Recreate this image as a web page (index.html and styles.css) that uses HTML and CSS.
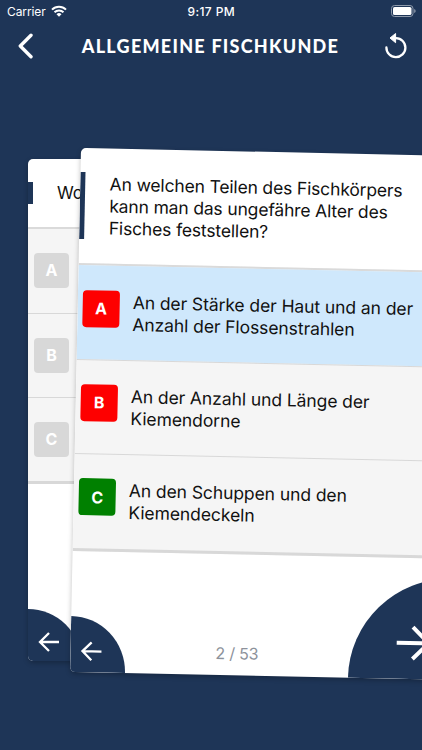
FILE: index.html
```html
<!DOCTYPE html>
<html lang="de">

<head>
  <meta charset="UTF-8">
  <meta name="viewport" content="width=device-width, initial-scale=1.0">
  <title>Allgemeine Fischkunde</title>
  <link rel="stylesheet" href="styles.css">
</head>

<body>
  <div class="status">
    <span class="carrier">Carrier</span>
    <svg class="wifi" width="16" height="12" viewBox="0 0 16 12" fill="none" stroke="#fff" stroke-width="2">
      <path d="M1 4.6a10 10 0 0 1 14 0M3.5 7.3a6.4 6.4 0 0 1 9 0" />
      <path d="M5.5 9.2a3.6 3.6 0 0 1 5 0L8 11.7z" fill="#fff" stroke="none" />
    </svg>
    <span class="time">9:17 PM</span>
    <svg class="battery" width="25" height="12" viewBox="0 0 25 12">
      <rect x=".5" y=".5" width="21.5" height="11" rx="3" fill="none" stroke="#8e9aab" />
      <rect x="2" y="2" width="18.5" height="8" rx="1.6" fill="#fff" />
      <path d="M23.2 4v4a2.1 2.1 0 0 0 0-4z" fill="#8e9aab" />
    </svg>
  </div>

  <header class="nav">
    <svg class="back" width="16" height="26" viewBox="0 0 16 26" fill="none" stroke="#fff" stroke-width="3.4" stroke-linecap="round" stroke-linejoin="round">
      <path d="M13 2.3L2.3 13L13 23.7" />
    </svg>
    <h1>ALLGEMEINE FISCHKUNDE</h1>
    <svg class="reload" width="22" height="26" viewBox="0 0 22 26">
      <path d="M1.4 14.5A9.5 9.5 0 1 0 11 5.1H8.5" fill="none" stroke="#fff" stroke-width="2.3" stroke-linecap="round" />
      <path d="M5 5L10.6 .5V9.7z" fill="#fff" stroke="#fff" stroke-linejoin="round" />
    </svg>
  </header>

  <main class="stack">
    <section class="card card--behind">
      <div class="question"><p>Wo</p></div>
      <ul class="answers">
        <li><span class="letter">A</span></li>
        <li><span class="letter">B</span></li>
        <li><span class="letter">C</span></li>
      </ul>
      <div class="prev">
        <svg class="arrow" width="22" height="20" viewBox="0 0 22 20"><path d="M11 1L2 10L11 19M2 10H21" /></svg>
      </div>
    </section>

    <section class="card card--front">
      <div class="question">
        <p>An welchen Teilen des Fischkörpers<br>kann man das ungefähre Alter des<br>Fisches feststellen?</p>
      </div>
      <ul class="answers">
        <li class="selected">
          <span class="letter wrong">A</span>
          <p>An der Stärke der Haut und an der<br>Anzahl der Flossenstrahlen</p>
        </li>
        <li>
          <span class="letter wrong">B</span>
          <p>An der Anzahl und Länge der<br>Kiemendorne</p>
        </li>
        <li>
          <span class="letter right">C</span>
          <p>An den Schuppen und den<br>Kiemendeckeln</p>
        </li>
      </ul>
      <div class="prev">
        <svg class="arrow" width="22" height="20" viewBox="0 0 22 20"><path d="M11 1L2 10L11 19M2 10H21" /></svg>
      </div>
      <span class="count">2 / 53</span>
      <div class="next">
        <svg class="arrow arrow--big" width="36" height="36" viewBox="0 0 36 36"><path d="M17 2L33 18L17 34M33 18H1" /></svg>
      </div>
    </section>
  </main>
</body>

</html>
```
FILE: styles.css
```css
* {
  box-sizing: border-box;
}
body {
  margin: 0;
  width: 422px;
  height: 750px;
  overflow: hidden;
  background: #1e3557;
  color: #111;
  font-family: Inter, "Liberation Sans", sans-serif;
}
h1, p, ul {
  margin: 0;
  padding: 0;
}
ul {
  list-style: none;
}
svg {
  display: block;
}

/* status bar */
.status {
  display: grid;
  grid-template-columns: auto 1fr auto 1fr;
  align-items: center;
  height: 22px;
  padding: 0 6px 0 7px;
  color: #fff;
  font-size: 12px;
}
.carrier {
  letter-spacing: -0.1px;
}
.wifi {
  margin-left: 5px;
}
.time {
  font-weight: 500;
  letter-spacing: 0.4px;
  margin-left: -39px;
}
.battery {
  justify-self: end;
}

/* title bar */
.nav {
  display: flex;
  justify-content: space-between;
  align-items: center;
  height: 48px;
  padding: 0 15px 0 18px;
}
.nav h1 {
  padding-left: 2px;
  color: #fff;
  font-family: Lato, sans-serif;
  font-size: 18px;
  font-weight: 900;
  letter-spacing: 1.25px;
  white-space: nowrap;
}

/* cards */
.stack {
  position: relative;
  height: 680px;
  overflow: hidden;
}
.card {
  position: absolute;
  overflow: hidden;
  background: #fff;
  border-radius: 5px;
  box-shadow: 0 2px 5px rgba(0, 0, 0, 0.25);
}
.card--behind {
  left: 28px;
  top: 89px;
  width: 364px;
  height: 502px;
}
.card--front {
  left: 81px;
  top: 78px;
  width: 379px;
  height: 524px;
  transform: rotate(1.2deg);
  transform-origin: 0 0;
}
.question {
  padding: 24px 0;
  font-size: 17.5px;
  line-height: 22px;
  letter-spacing: -0.16px;
  white-space: nowrap;
}
.question p {
  padding: 1px 0 0 24.5px;
  margin-bottom: -0.5px;
  border-left: 5px solid #1e3557;
}
.card--behind .question {
  padding: 23px 0;
  font-size: 17px;
}
.card--behind .question p {
  height: 22px;
  padding: 0 0 0 24px;
}
.answers {
  background: #f5f5f5;
  border-top: 2px solid #dadada;
  border-bottom: 3px solid #d8d8d8;
}
.answers li {
  display: flex;
  gap: 13px;
  height: 94.5px;
  padding: 24px 0 0 5px;
  font-size: 17.5px;
  line-height: 22px;
  letter-spacing: -0.08px;
  white-space: nowrap;
}
.answers li + li {
  border-top: 1px solid #d8d8d8;
}
.answers li p {
  padding-top: 1px;
}
.answers li.selected {
  height: 94px;
  padding-top: 25px;
  background: #cfe8fc;
}
.card--behind .answers li {
  height: 84px;
  padding: 24px 0 0 6px;
}
.letter {
  display: flex;
  justify-content: center;
  align-items: center;
  width: 37px;
  height: 37px;
  border-radius: 4px;
  background: #d8d8d8;
  color: #fff;
  font-size: 16px;
  font-weight: 700;
}
.card--behind .letter {
  width: 35px;
  height: 35px;
}
.wrong {
  background: #fe0000;
}
.right {
  background: #008000;
}

/* corner buttons */
.prev {
  position: absolute;
  left: 0;
  bottom: 0;
  width: 55px;
  height: 56px;
  padding: 25px 0 0 10px;
  border-radius: 0 100% 0 0;
  background: #1e3557;
}
.card--behind .prev {
  width: 53px;
  height: 52px;
  padding: 23px 0 0 10px;
}
.next {
  position: absolute;
  right: 0;
  bottom: 0;
  width: 101px;
  height: 101px;
  padding: 47px 0 0 47px;
  border-radius: 100% 0 0 0;
  background: #1e3557;
}
.arrow {
  fill: none;
  stroke: #fff;
  stroke-width: 2.3;
}
.arrow--big {
  stroke-width: 4;
}
.count {
  position: absolute;
  left: 145px;
  bottom: 11px;
  color: #8d929b;
  font-size: 16px;
  line-height: 22px;
  letter-spacing: -0.2px;
}
```
